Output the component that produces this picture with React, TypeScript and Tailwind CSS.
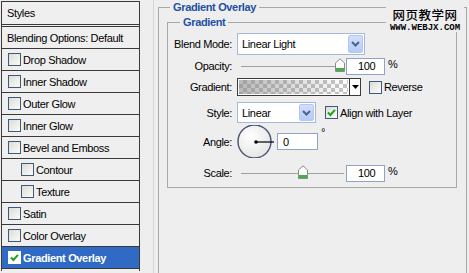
import type { ReactNode } from "react";

function Check({ checked, selected }: { checked?: boolean; selected?: boolean }) {
  return (
    <span
      className={
        "flex h-[13px] w-[13px] shrink-0 items-center justify-center border " +
        (selected ? "border-white bg-white" : "border-[#3d5a7a] bg-linear-to-br from-[#dcdcd7] to-[#fbfbf9]")
      }
    >
      {checked && (
        <svg width="9" height="9" viewBox="0 0 9 9">
          <path d="M1 4.5 L3.4 7 L8 1.8" fill="none" stroke="#21a121" strokeWidth="2" />
        </svg>
      )}
    </span>
  );
}

function StyleRow({ label, indent, selected }: { label: string; indent?: boolean; selected?: boolean }) {
  return (
    <div
      className={
        "flex h-[22px] items-center gap-[2px] border-b border-[#3a3a3a] " +
        (indent ? "pl-[19px] " : "pl-[6px] ") +
        (selected ? "bg-[#316ac5] font-bold text-white" : "")
      }
    >
      <Check checked={selected} selected={selected} />
      <span>{label}</span>
    </div>
  );
}

function Chevron() {
  return (
    <svg width="9" height="6" viewBox="0 0 9 6">
      <path d="M1 1 L4.5 4.5 L8 1" fill="none" stroke="#4d6185" strokeWidth="2" />
    </svg>
  );
}

function Select({ value, width }: { value: string; width: string }) {
  return (
    <div className={"flex h-full items-center border border-[#a5b9d8] bg-white pl-[4px] " + width}>
      <span className="flex-1">{value}</span>
      <span className="mr-px flex h-[calc(100%-2px)] w-[15px] items-center justify-center rounded-[2px] border border-[#b2c6f0] bg-linear-to-b from-[#d2defc] to-[#b6cbf8]">
        <Chevron />
      </span>
    </div>
  );
}

function Thumb() {
  return (
    <svg width="10" height="14" viewBox="0 0 10 14">
      <path d="M0.5 5 L5 0.8 L9.5 5 V13.5 H0.5 Z" fill="#fbfbfb" stroke="#8a8a8a" />
      <rect x="1" y="10" width="8" height="3" fill="#3fb04a" />
    </svg>
  );
}

function Slider({ thumb, width }: { thumb: string; width: string }) {
  return (
    <div className={"relative h-full shrink-0 " + width}>
      <div className="absolute left-[4px] right-[2px] top-[9px] h-[2px] border-t border-[#a0a0a0] border-b-white" />
      <div className={"absolute top-[1px] " + thumb}>
        <Thumb />
      </div>
    </div>
  );
}

function NumBox({ value, width }: { value: string; width: string }) {
  return (
    <div className={"flex h-[17px] items-center border border-[#8fa4c4] bg-white pl-[11px] " + width}>{value}</div>
  );
}

function Row({ label, className, children }: { label: string; className: string; children: ReactNode }) {
  return (
    <div className={"flex items-center " + className}>
      <span className="w-[64px] shrink-0 text-right">{label}</span>
      <div className="ml-[5px] flex h-full items-center">{children}</div>
    </div>
  );
}

export default function App() {
  const styles = [
    "Drop Shadow",
    "Inner Shadow",
    "Outer Glow",
    "Inner Glow",
    "Bevel and Emboss",
  ];
  return (
    <div className="relative flex h-[273px] w-[469px] overflow-hidden bg-[#eeeeee] font-['Liberation_Sans',Arial,sans-serif] text-[11px] leading-[14px] tracking-[-0.35px] text-black">
      <div className="ml-px mt-px flex h-[270px] w-[139px] shrink-0 flex-col border-x border-t border-[#3a3a3a] bg-[#efefef]">
        <div className="flex h-[22px] items-center pl-[5px]">Styles</div>
        <div className="h-[3px] border-y border-[#3a3a3a]" />
        <div className="flex h-[22px] items-center border-b border-[#3a3a3a] pl-[5px]">Blending Options: Default</div>
        {styles.map((s) => (
          <StyleRow key={s} label={s} />
        ))}
        <StyleRow label="Contour" indent />
        <StyleRow label="Texture" indent />
        <StyleRow label="Satin" />
        <StyleRow label="Color Overlay" />
        <StyleRow label="Gradient Overlay" selected />
      </div>

      <div className="ml-[13px] h-full border-l border-[#d6d6d6]" />

      <fieldset className="ml-[4px] h-[300px] w-[309px] shrink-0 border border-[#a8a8a8]">
        <legend className="ml-[11px] px-[3px] font-bold text-[#1e50a2]">Gradient Overlay</legend>
        <fieldset className="ml-[8px] mt-px w-[290px] border border-[#a8a8a8] pb-[5px]">
          <legend className="ml-[12px] px-[3px] font-bold text-[#1e50a2]">Gradient</legend>

          <Row label="Blend Mode:" className="mt-[4px] h-[22px]">
            <Select value="Linear Light" width="w-[128px]" />
          </Row>

          <Row label="Opacity:" className="mt-[2px] h-[18px]">
            <Slider thumb="left-[98px]" width="w-[109px]" />
            <NumBox value="100" width="w-[39px]" />
            <span className="ml-[3px] self-start">%</span>
          </Row>

          <Row label="Gradient:" className="mt-[3px] h-[18px]">
            <div className="flex h-full w-[124px] border border-[#3c3c3c] bg-white">
              <div className="relative flex-1 border border-white bg-[conic-gradient(#c4c4c4_25%,#ffffff_0_50%,#c4c4c4_0_75%,#ffffff_0)] bg-[length:8px_8px]">
                <div className="absolute inset-0 bg-linear-to-r from-[#8a8a8a]/60 to-[#8a8a8a]/0" />
              </div>
              <div className="flex w-[11px] items-center justify-center border-l border-[#3c3c3c] bg-white">
                <svg width="7" height="4" viewBox="0 0 7 4">
                  <path d="M0 0 H7 L3.5 4 Z" fill="#000" />
                </svg>
              </div>
            </div>
            <span className="ml-[8px]">
              <Check />
            </span>
            <span className="ml-[2px]">Reverse</span>
          </Row>

          <Row label="Style:" className="mt-[6px] h-[21px]">
            <Select value="Linear" width="w-[79px]" />
            <span className="ml-[9px]">
              <Check checked />
            </span>
            <span className="ml-[2px]">Align with Layer</span>
          </Row>

          <Row label="Angle:" className="mt-[2px] h-[33px]">
            <svg width="37" height="33" viewBox="0 0 37 33" className="shrink-0">
              <defs>
                <radialGradient id="dial" cx="0.4" cy="0.35" r="0.7">
                  <stop offset="0" stopColor="#ffffff" />
                  <stop offset="1" stopColor="#e4e4e4" />
                </radialGradient>
              </defs>
              <circle cx="17.5" cy="16.5" r="16.5" fill="url(#dial)" stroke="#4b5470" strokeWidth="1.4" />
              <line x1="19" y1="17" x2="37" y2="17" stroke="#000" strokeWidth="1.2" />
              <circle cx="19" cy="17" r="1.8" fill="#000" />
            </svg>
            <div className="ml-[3px] flex h-[17px] w-[41px] items-center border border-[#8fa4c4] bg-white pl-[5px]">0</div>
            <span className="ml-[3px] self-start">°</span>
          </Row>

          <Row label="Scale:" className="mt-[6px] h-[18px]">
            <Slider thumb="left-[61px]" width="w-[109px]" />
            <NumBox value="100" width="w-[39px]" />
            <span className="ml-[3px] self-start">%</span>
          </Row>
        </fieldset>
      </fieldset>

      <div className="absolute left-[386px] top-[4px] flex w-[78px] flex-col items-center bg-[#eeeeee] tracking-normal">
        <span className="pt-[3px] font-['Noto_Sans_CJK_SC',sans-serif] text-[12.5px] font-medium leading-[15px] tracking-[0.5px]">
          网页教学网
        </span>
        <span className="mt-[2px] font-['Liberation_Mono',monospace] text-[9px] font-bold leading-[8px]">
          WWW.WEBJX.COM
        </span>
      </div>
    </div>
  );
}
